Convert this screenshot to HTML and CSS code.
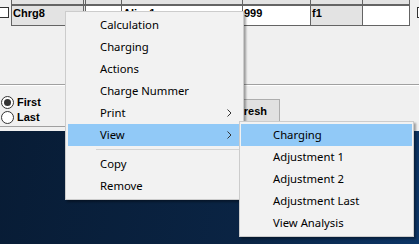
FILE: index.html
```html
<!DOCTYPE html>
<html lang="en">
<head>
  <meta charset="UTF-8" />
  <title>Charges</title>
  <link rel="stylesheet" href="styles.css">
</head>
<body>

  <!-- Application window -->
  <div class="app">
    <div class="grid">
      <span class="check left"></span>
      <div class="table">
        <div class="head-row">
          <span class="cell"></span>
          <span class="cell"></span>
          <span class="cell"></span>
          <span class="cell"></span>
          <span class="cell"></span>
          <span class="cell"></span>
          <span class="cell"></span>
        </div>
        <div class="data-row">
          <span class="cell shade">Chrg8</span>
          <span class="cell shade"></span>
          <span class="cell"></span>
          <span class="cell">Alias1</span>
          <span class="cell">999</span>
          <span class="cell shade">f1</span>
          <span class="cell"></span>
        </div>
      </div>
      <span class="check right"></span>
    </div>

    <div class="divider"></div>

    <div class="lower">
      <div class="options">
        <label class="radio"><span class="dot checked"></span>First</label>
        <label class="radio"><span class="dot"></span>Last</label>
      </div>
      <button class="refresh">Refresh</button>
    </div>
  </div>

  <!-- Desktop -->
  <div class="desktop"></div>

  <!-- Context menu -->
  <div class="menu main-menu">
    <div class="item">Calculation</div>
    <div class="item">Charging</div>
    <div class="item">Actions</div>
    <div class="item">Charge Nummer</div>
    <div class="item sub">Print
      <svg class="arrow" width="5" height="8" viewBox="0 0 5 8"><path d="M0.5 0.5 L4 4 L0.5 7.5" fill="none" stroke="#333" stroke-width="1"/></svg>
    </div>
    <div class="item sub active">View
      <svg class="arrow" width="5" height="8" viewBox="0 0 5 8"><path d="M0.5 0.5 L4 4 L0.5 7.5" fill="none" stroke="#333" stroke-width="1"/></svg>
    </div>
    <div class="separator"></div>
    <div class="item">Copy</div>
    <div class="item">Remove</div>
  </div>

  <!-- Submenu View -->
  <div class="menu sub-menu">
    <div class="item active">Charging</div>
    <div class="item">Adjustment 1</div>
    <div class="item">Adjustment 2</div>
    <div class="item">Adjustment Last</div>
    <div class="item">View Analysis</div>
  </div>

</body>
</html>
```

FILE: styles.css
```css
* { margin: 0; padding: 0; box-sizing: border-box; }
html, body {
  width: 419px;
  height: 244px;
  overflow: hidden;
}
body {
  position: relative;
  display: flex;
  flex-direction: column;
  font-family: "Liberation Sans", Arial, sans-serif;
  background: #0a2240;
}

/* app window */
.app {
  height: 131px;
  background: #f0f0f0;
  flex-shrink: 0;
  overflow: hidden;
}

.grid {
  display: flex;
  align-items: flex-start;
}
.grid > * { flex-shrink: 0; }

.check {
  display: block;
  width: 10px;
  height: 11px;
  margin-top: 7px;
  background: #fff;
  border: 1px solid #333;
}
.check.left { margin-left: -1px; margin-right: 2px; }
.check.right { margin-left: 7px; }

.table {
  border-left: 1px solid #646464;
}
.head-row, .data-row {
  display: grid;
  grid-template-columns: 72px 2px 36px 121px 68px 52px 47px;
}
.head-row { height: 4px; }
.data-row {
  border-top: 2px solid #646464;
  border-bottom: 1px solid #646464;
}
.cell {
  border-right: 1px solid #646464;
  background: #fff;
  font-size: 11px;
  font-weight: bold;
  line-height: 13px;
  height: 19px;
  padding: 1px 0 0 1px;
  overflow: hidden;
  white-space: nowrap;
}
.head-row .cell { height: 4px; padding: 0; background: #e3e3e3; }
.cell.shade { background: #e3e3e3; }

.divider {
  margin-top: 58px;
  height: 2px;
  border-top: 1px solid #a0a0a0;
  border-bottom: 1px solid #fff;
}

.lower {
  display: flex;
  align-items: flex-start;
}
.lower > * { flex-shrink: 0; }

.options {
  width: 120px;
  padding-top: 10px;
  border-bottom: 1px solid #a0a0a0;
}
.radio {
  display: flex;
  align-items: flex-start;
  gap: 3px;
  height: 15px;
  padding-left: 1px;
  font-size: 11px;
  font-weight: bold;
  line-height: 13px;
}
.dot {
  width: 13px;
  height: 13px;
  border-radius: 50%;
  border: 1px solid #333;
  background: #fff;
  display: flex;
  align-items: center;
  justify-content: center;
}
.dot.checked::after {
  content: "";
  width: 7px;
  height: 7px;
  border-radius: 50%;
  background: #333;
}

.refresh {
  margin: 13px 0 0 93px;
  width: 67px;
  height: 23px;
  background: #e1e1e1;
  border: 1px solid #adadad;
  font-family: "Liberation Sans", Arial, sans-serif;
  font-size: 11px;
  font-weight: bold;
  color: #000;
}

/* desktop */
.desktop {
  flex: 1;
  background: linear-gradient(100deg, #081c35 0%, #0a2444 60%, #0c3566 100%);
}

/* menus */
.menu {
  position: absolute;
  background: #f2f2f2;
  border: 1px solid #ccc;
  box-shadow: 2px 2px 2px rgba(0, 0, 0, 0.35);
  font-family: "Noto Sans", "Open Sans", sans-serif;
  font-size: 11.3px;
  color: #000;
}
.main-menu {
  left: 65px;
  top: 11px;
  width: 179px;
  padding: 2px;
}
.sub-menu {
  left: 239px;
  top: 121px;
  width: 175px;
  padding: 2px 1px;
}
.item {
  position: relative;
  height: 22px;
  line-height: 22px;
  padding-left: 32px;
  white-space: nowrap;
}
.item.active { background: #91c9f7; }
.item .arrow {
  position: absolute;
  right: 9px;
  top: 7px;
}
.separator {
  margin: 3px 0 3px 28px;
  border-top: 1px solid #d3d3d3;
}
```
